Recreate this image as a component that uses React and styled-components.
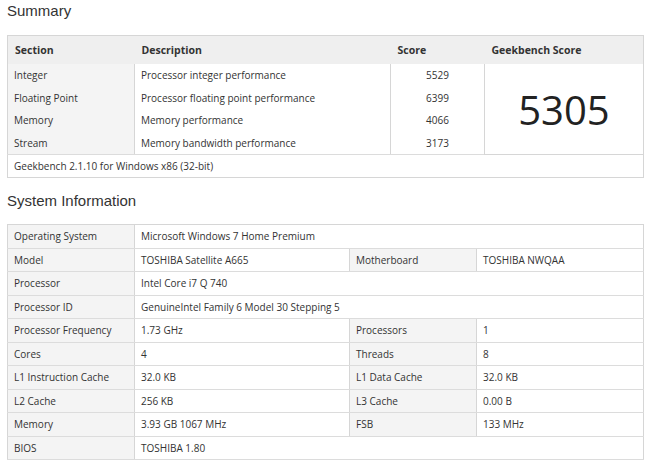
import React from "react";
import styled, { createGlobalStyle } from "styled-components";

const Global = createGlobalStyle`
  body { margin: 0; background: #fff; font-family: "Open Sans", sans-serif; color: #333; }
`;
const Page = styled.div`padding: 0 7px; width: 636px;`;
const H = styled.h2`
  font-family: "Liberation Sans", Arial, sans-serif; font-weight: normal; font-size: 15px;
  color: #333; margin: 0; padding: ${p => p.$top}px 0 0 0; height: ${p => p.$h}px; box-sizing: border-box;
`;
const Table = styled.table`
  width: 636px; border-collapse: collapse; border: 1px solid #d6d6d6;
  font-size: 10px; table-layout: fixed;
`;
const Th = styled.th`
  background: #efefef; text-align: left; font-weight: bold;
  font-size: 10.5px; color: #333; height: 28px; padding: 0 0 0 7px;
`;
const Td = styled.td`
  height: ${p => p.$h || 22}px; padding: 0 0 0 ${p => p.$center ? 0 : 6}px;
  text-align: ${p => p.$center ? "center" : "left"};
  background: ${p => p.$label ? "#f4f4f4" : "#fff"};
  border-right: ${p => p.$br ? "1px solid #d6d6d6" : "none"};
  border-bottom: ${p => p.$bb ? "1px solid #dcdcdc" : "none"};
  white-space: nowrap;
`;
const Big = styled.td`
  text-align: center; font-size: 40px; color: #222; vertical-align: middle;
  border-bottom: 1px solid #d6d6d6;
`;

const sum = [
  ["Integer", "Processor integer performance", "5529"],
  ["Floating Point", "Processor floating point performance", "6399"],
  ["Memory", "Memory performance", "4066"],
  ["Stream", "Memory bandwidth performance", "3173"],
];
const sys = [
  ["Operating System", "Microsoft Windows 7 Home Premium"],
  ["Model", "TOSHIBA Satellite A665", "Motherboard", "TOSHIBA NWQAA"],
  ["Processor", "Intel Core i7 Q 740"],
  ["Processor ID", "GenuineIntel Family 6 Model 30 Stepping 5"],
  ["Processor Frequency", "1.73 GHz", "Processors", "1"],
  ["Cores", "4", "Threads", "8"],
  ["L1 Instruction Cache", "32.0 KB", "L1 Data Cache", "32.0 KB"],
  ["L2 Cache", "256 KB", "L3 Cache", "0.00 B"],
  ["Memory", "3.93 GB 1067 MHz", "FSB", "133 MHz"],
  ["BIOS", "TOSHIBA 1.80"],
];

export default function App() {
  return (
    <Page>
      <Global />
      <H $top={2} $h={35}>Summary</H>
      <Table>
        <colgroup><col width="127" /><col width="256" /><col width="94" /><col width="159" /></colgroup>
        <thead><tr><Th>Section</Th><Th>Description</Th><Th>Score</Th><Th>Geekbench Score</Th></tr></thead>
        <tbody>
          {sum.map((r, i) => (
            <tr key={i}>
              <Td $label $br $h={22.5} $bb={i === 3}>{r[0]}</Td>
              <Td $br $h={22.5} $bb={i === 3}>{r[1]}</Td>
              <Td $center $br $h={22.5} $bb={i === 3}>{r[2]}</Td>
              {i === 0 && <Big rowSpan={4}>5305</Big>}
            </tr>
          ))}
          <tr><Td colSpan={4} $h={22}>Geekbench 2.1.10 for Windows x86 (32-bit)</Td></tr>
        </tbody>
      </Table>
      <H $top={14} $h={46}>System Information</H>
      <Table>
        <colgroup><col width="127" /><col width="215" /><col width="127" /><col width="167" /></colgroup>
        <tbody>
          {sys.map((r, i) => (
            <tr key={i}>
              <Td $label $br $bb $h={22.5}>{r[0]}</Td>
              {r.length === 2 ? (
                <Td colSpan={3} $bb $h={22.5}>{r[1]}</Td>
              ) : (
                <>
                  <Td $br $bb $h={22.5}>{r[1]}</Td>
                  <Td $label $br $bb $h={22.5}>{r[2]}</Td>
                  <Td $bb $h={22.5}>{r[3]}</Td>
                </>
              )}
            </tr>
          ))}
        </tbody>
      </Table>
    </Page>
  );
}
